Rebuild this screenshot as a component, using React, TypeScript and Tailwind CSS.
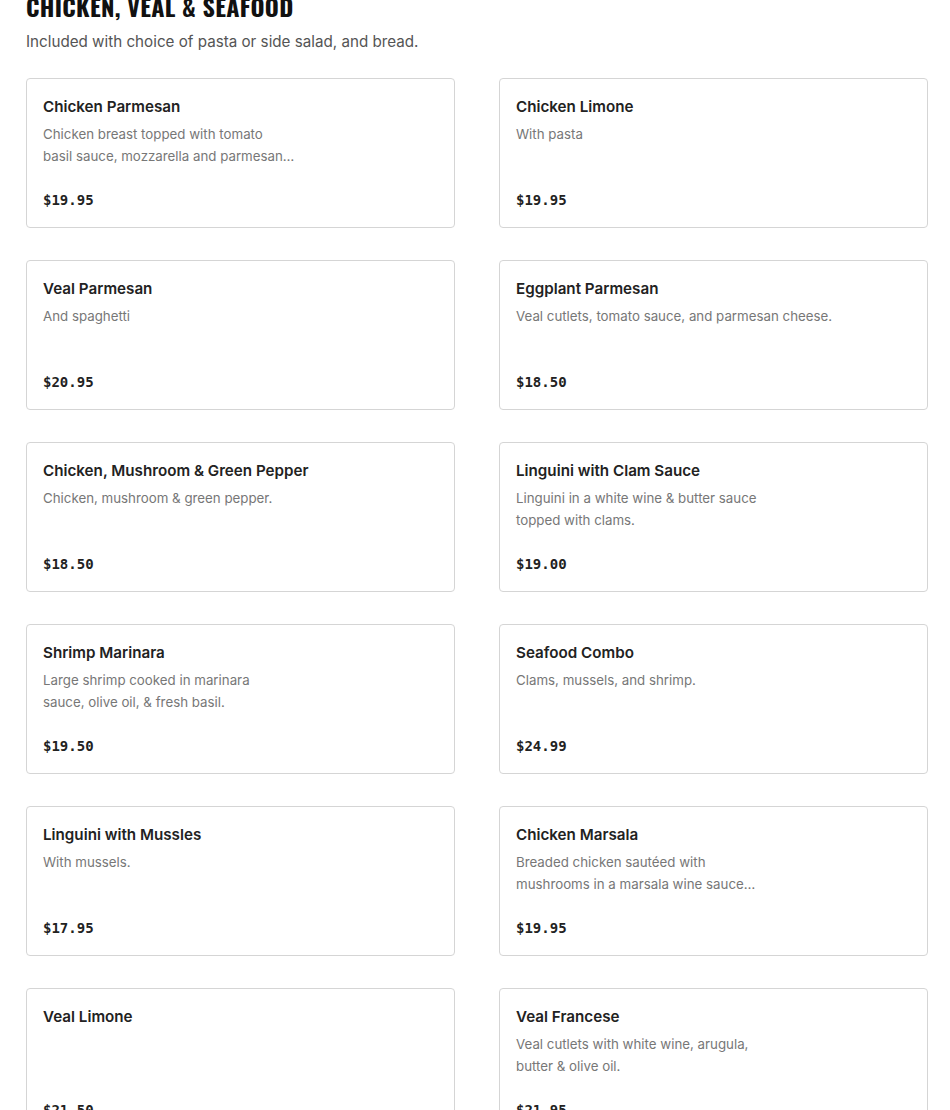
const items = [
  { name: 'Chicken Parmesan', desc: ['Chicken breast topped with tomato', 'basil sauce, mozzarella and parmesan…'], price: '$19.95' },
  { name: 'Chicken Limone', desc: ['With pasta'], price: '$19.95' },
  { name: 'Veal Parmesan', desc: ['And spaghetti'], price: '$20.95' },
  { name: 'Eggplant Parmesan', desc: ['Veal cutlets, tomato sauce, and parmesan cheese.'], price: '$18.50' },
  { name: 'Chicken, Mushroom & Green Pepper', desc: ['Chicken, mushroom & green pepper.'], price: '$18.50' },
  { name: 'Linguini with Clam Sauce', desc: ['Linguini in a white wine & butter sauce', 'topped with clams.'], price: '$19.00' },
  { name: 'Shrimp Marinara', desc: ['Large shrimp cooked in marinara', 'sauce, olive oil, & fresh basil.'], price: '$19.50' },
  { name: 'Seafood Combo', desc: ['Clams, mussels, and shrimp.'], price: '$24.99' },
  { name: 'Linguini with Mussles', desc: ['With mussels.'], price: '$17.95' },
  { name: 'Chicken Marsala', desc: ['Breaded chicken sautéed with', 'mushrooms in a marsala wine sauce…'], price: '$19.95' },
  { name: 'Veal Limone', desc: [], price: '$21.50' },
  { name: 'Veal Francese', desc: ['Veal cutlets with white wine, arugula,', 'butter & olive oil.'], price: '$21.95' },
];

export default function App() {
  return (
    <div className="h-[1110px] overflow-hidden bg-white px-[26px] font-['Inter','Liberation_Sans',sans-serif]">
      <h2 className="mt-[-10px] text-[24px] leading-[32px] font-bold uppercase tracking-[0.3px] text-[#111] font-['Oswald','Liberation_Sans_Narrow','DejaVu_Sans_Condensed',sans-serif]">
        Chicken, Veal &amp; Seafood
      </h2>
      <p className="mt-[9px] text-[15.2px] leading-[22px] text-[#555]">
        Included with choice of pasta or side salad, and bread.
      </p>
      <div className="mt-[25px] grid grid-cols-2 gap-x-[44px] gap-y-[32px] w-[902px]">
        {items.map((item) => (
          <div
            key={item.name}
            className="flex h-[150px] flex-col rounded-[4px] border border-[#d5d5d5] px-4 pt-[15px] pb-[16px]"
          >
            <h3 className="text-[15.2px] leading-[26px] font-semibold text-[#222]">{item.name}</h3>
            <div className="mt-[3px] text-[13.3px] leading-[22px] text-[#777]">
              {item.desc.map((line) => (
                <div key={line}>{line}</div>
              ))}
            </div>
            <p className="mt-auto text-[14px] leading-[22px] font-bold text-[#222] font-['DejaVu_Sans_Mono','Liberation_Mono',monospace]">
              {item.price}
            </p>
          </div>
        ))}
      </div>
    </div>
  );
}
